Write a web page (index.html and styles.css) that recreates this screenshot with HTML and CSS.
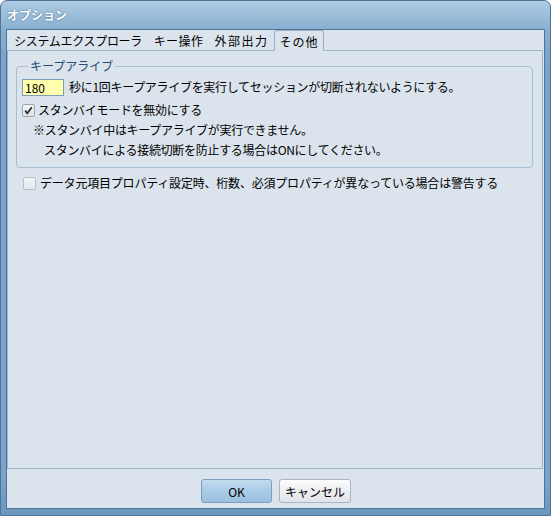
FILE: index.html
```html
<!DOCTYPE HTML>
<html>
<head>
    <title>オプション</title>
    <meta charset="utf-8">
    <link rel="stylesheet" href="styles.css">
</head>
<body>

<div class="window">
    <div class="titlebar">オプション</div>

    <div class="client">
        <div class="tabs">
            <div class="tab t1">システムエクスプローラ</div>
            <div class="tab t2">キー操作</div>
            <div class="tab t3">外部出力</div>
            <div class="tab t4 selected">その他</div>
        </div>

        <div class="panel">
            <fieldset class="group">
                <legend>キープアライブ</legend>
                <div class="row first">
                    <span class="field">180</span>
                    <span class="label">秒に1回キープアライブを実行してセッションが切断されないようにする。</span>
                </div>
                <div class="row check">
                    <span class="cb">
                        <svg width="11" height="11" viewBox="0 0 11 11"><path d="M2.2 5.6 L4.3 8.2 L8.8 2.2" fill="none" stroke="#2b2b2b" stroke-width="1.8"/></svg>
                    </span>
                    <span class="label">スタンバイモードを無効にする</span>
                </div>
                <div class="note">※スタンバイ中はキープアライブが実行できません。</div>
                <div class="note indent">スタンバイによる接続切断を防止する場合はONにしてください。</div>
            </fieldset>

            <div class="row check outside">
                <span class="cb off"></span>
                <span class="label">データ元項目プロパティ設定時、桁数、必須プロパティが異なっている場合は警告する</span>
            </div>
        </div>

        <div class="buttons">
            <button class="btn primary">OK</button>
            <button class="btn">キャンセル</button>
        </div>
    </div>
</div>

</body>
</html>
```

FILE: styles.css
```css
html, body {
    margin: 0;
    background: #ffffff;
}
body {
    font-family: "Noto Sans CJK JP", "Noto Sans", sans-serif;
    font-size: 12px;
    color: #000;
}

/* window frame */
.window {
    width: 551px;
    height: 516px;
    box-sizing: border-box;
    border: 1px solid #4d7399;
    border-radius: 7px 7px 0 0;
    padding: 0 5px 6px 5px;
    background: linear-gradient(#aecbe2 0px, #88b0d1 28px, #7aa4c8 60px, #7aa4c8 480px, #6b96bd 516px);
}
.titlebar {
    height: 28px;
    line-height: 28px;
    padding-left: 1px;
    color: #fff;
    font-weight: bold;
    font-size: 12px;
    text-shadow: 0 0 2px #3d6387;
}
.client {
    height: 480px;
    box-sizing: border-box;
    border: 1px solid #4f7499;
    background: #dbe4ed;
    display: flex;
    flex-direction: column;
}

/* tabs */
.tabs {
    display: flex;
    height: 20px;
    padding-left: 1px;
}
.tab {
    height: 20px;
    line-height: 21px;
    text-align: center;
    white-space: nowrap;
    box-sizing: border-box;
}
.t1 { width: 140px; letter-spacing: -0.3px; }
.t2 { width: 61px; letter-spacing: 0.4px; }
.t3 { width: 65px; letter-spacing: 1.5px; }
.t4 { width: 50px; letter-spacing: 1px; }
.tab.selected {
    position: relative;
    z-index: 1;
    height: 21px;
    border: 1px solid #98afc4;
    border-bottom: none;
    border-radius: 3px 3px 0 0;
    background: #dbe4ed;
    line-height: 21px;
}

.panel {
    height: 419px;
    box-sizing: border-box;
    margin-right: 1px;
    border: 1px solid #a2b6c9;
    padding: 7px 9px 0 8px;
}

/* group box */
.group {
    margin: 0;
    border: 1px solid #a9bdd0;
    border-radius: 4px;
    padding: 3px 4px 7px 5px;
}
.group legend {
    margin-left: 6px;
    padding: 0 2px;
    line-height: 16px;
    color: #264a78;
}

.row {
    display: flex;
    align-items: center;
    height: 20px;
    white-space: nowrap;
}
.row.first {
    margin-bottom: 3px;
}
.field {
    width: 42px;
    height: 17px;
    box-sizing: border-box;
    border: 1px solid #7f9db9;
    background: #ffffae;
    padding-left: 2px;
    line-height: 15px;
    margin-right: 5px;
}
.label {
    line-height: 20px;
    letter-spacing: -0.3px;
}
.cb {
    width: 13px;
    height: 13px;
    box-sizing: border-box;
    border: 1px solid #9aa7b4;
    border-radius: 2px;
    background: linear-gradient(#f4f4f4, #e0e4e8);
    margin-right: 3px;
    display: flex;
    align-items: center;
    justify-content: center;
}
.cb.off {
    border-color: #b6c0ca;
    background: linear-gradient(#f3f5f7, #e3e8ed);
}
.note {
    height: 20px;
    line-height: 20px;
    padding-left: 11px;
    white-space: nowrap;
    letter-spacing: -0.3px;
}
.note.indent {
    padding-left: 22px;
}
.outside {
    margin-top: 5px;
    padding-left: 7px;
}
.outside .cb {
    margin-right: 4px;
}
.outside .label {
    letter-spacing: -0.2px;
}

/* buttons */
.buttons {
    display: flex;
    justify-content: center;
    gap: 7px;
    padding-top: 10px;
    padding-left: 1px;
}
.btn {
    height: 24px;
    width: 72px;
    box-sizing: border-box;
    border: 1px solid #a7b5c4;
    border-radius: 3px;
    background: linear-gradient(#fdfdfd, #eceef0 50%, #e1e4e8);
    font-family: "Noto Sans CJK JP", "Noto Sans", sans-serif;
    font-size: 12px;
    padding: 0;
    color: #000;
}
.btn.primary {
    width: 71px;
    border-color: #7b9ec2;
    background: linear-gradient(#c3dcef, #a9cbe6 50%, #9bc0df);
}
```
